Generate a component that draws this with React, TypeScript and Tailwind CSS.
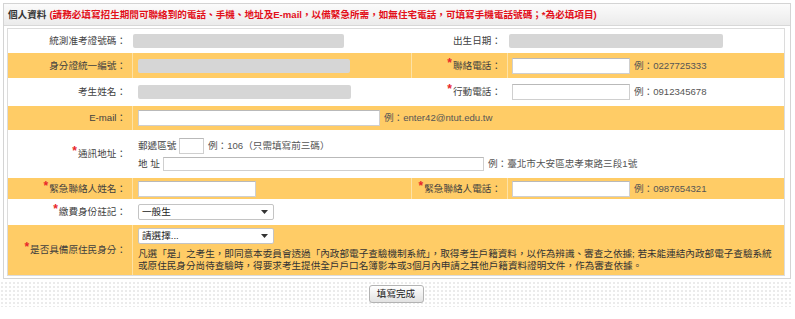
import React from "react";

const FONT = "font-['Liberation_Sans','Noto_Sans_CJK_TC',sans-serif]";

function Star() {
  return <span className="relative top-[-3px] mr-[1px] text-[12px] font-bold leading-none text-[#e8262a]">*</span>;
}

function Label({ children, star, w }: { children: React.ReactNode; star?: boolean; w: string }) {
  return (
    <div className={`${w} flex shrink-0 items-center justify-end pr-[6px] whitespace-nowrap`}>
      {star && <Star />}
      <span>{children}</span>
    </div>
  );
}

function Bar({ w = "w-[212px]" }: { w?: string }) {
  return <div className={`${w} h-[14px] rounded-[2px] bg-[#d6d6d6]`} />;
}

function Input({ w, h = "h-[16px]" }: { w: string; h?: string }) {
  return <div className={`${w} ${h} shrink-0 border border-[#cfcfcf] border-t-[#b9b9b9] bg-white`} />;
}

function Select({ text }: { text: string }) {
  return (
    <div className="flex h-[16px] w-[136px] items-center justify-between rounded-[2px] border border-[#c4c4c4] bg-white pl-[3px] pr-[5px] text-[#222]">
      <span>{text}</span>
      <svg width="7" height="4" viewBox="0 0 7 4">
        <path d="M0 0h7L3.5 4z" fill="#333" />
      </svg>
    </div>
  );
}

function Ex({ children }: { children: React.ReactNode }) {
  return <span className="ml-[4px] whitespace-nowrap text-[#555]">{children}</span>;
}

export default function App() {
  const orange = "bg-[#ffcc66]";
  const sep = "border-l border-[#fde2a6]";
  return (
    <div className={`${FONT} w-[795px] h-[319px] bg-white text-[9.6px] leading-[12px] text-[#3f3f3f]`}>
      <div className="pl-[3px] pt-[3px]">
        <div className="w-[788px] border border-[#d4d4d4] bg-white pb-[2px]">
          <div className="flex h-[22px] items-center border-b border-[#d8d8d8] bg-[linear-gradient(#fbfbfb,#ebebeb)] pl-[4px] font-bold">
            <span className="text-[#333]">個人資料</span>
            <span className="ml-[3px] text-[#e3101a]">
              (請務必填寫招生期間可聯絡到的電話、手機、地址及E-mail，以備緊急所需，如無住宅電話，可填寫手機電話號碼；*為必填項目)
            </span>
          </div>
          <div className="ml-[3px] mt-[2px] w-[778px] border border-[#dcdcdc]">
            {/* R1 */}
            <div className="flex h-[23px] bg-white">
              <Label w="w-[124px]">統測准考證號碼：</Label>
              <div className="flex w-[279px] items-center pl-[1px]">
                <Bar w="w-[211px]" />
              </div>
              <Label w="w-[96px]">出生日期：</Label>
              <div className="flex flex-1 items-center pl-[2px]">
                <Bar w="w-[214px]" />
              </div>
            </div>
            {/* R2 */}
            <div className={`flex h-[26px] border-t border-white ${orange}`}>
              <Label w="w-[124px]">身分證統一編號：</Label>
              <div className={`flex w-[279px] items-center pl-[5px] ${sep}`}>
                <Bar />
              </div>
              <div className={`${sep} flex`}>
                <Label w="w-[95px]" star>聯絡電話：</Label>
              </div>
              <div className={`flex flex-1 items-center pl-[4px] ${sep}`}>
                <Input w="w-[118px]" />
                <Ex>例：0227725333</Ex>
              </div>
            </div>
            {/* R3 */}
            <div className="flex h-[28px] bg-white">
              <Label w="w-[124px]">考生姓名：</Label>
              <div className="flex w-[279px] items-center pl-[6px]">
                <Bar w="w-[213px]" />
              </div>
              <Label w="w-[96px]" star>行動電話：</Label>
              <div className="flex flex-1 items-center pl-[5px]">
                <Input w="w-[118px]" />
                <Ex>例：0912345678</Ex>
              </div>
            </div>
            {/* R4 */}
            <div className={`flex h-[24px] ${orange}`}>
              <Label w="w-[124px]">E-mail：</Label>
              <div className={`flex flex-1 items-center pl-[5px] ${sep}`}>
                <Input w="w-[242px]" />
                <Ex>例：enter42@ntut.edu.tw</Ex>
              </div>
            </div>
            {/* R5 */}
            <div className="flex h-[48px] bg-white">
              <Label w="w-[124px]" star>通訊地址：</Label>
              <div className="flex flex-1 flex-col justify-center gap-[3px] pl-[6px]">
                <div className="flex items-center">
                  <span className="w-[41px]">郵遞區號</span>
                  <Input w="w-[25px]" />
                  <Ex>例：106（只需填寫前三碼）</Ex>
                </div>
                <div className="flex items-center">
                  <span className="w-[25px]">地 址</span>
                  <Input w="w-[321px]" h="h-[14px]" />
                  <Ex>例：臺北市大安區忠孝東路三段1號</Ex>
                </div>
              </div>
            </div>
            {/* R6 */}
            <div className={`flex h-[21px] ${orange}`}>
              <Label w="w-[124px]" star>緊急聯絡人姓名：</Label>
              <div className={`flex w-[279px] items-center pl-[5px] ${sep}`}>
                <Input w="w-[118px]" />
              </div>
              <div className={`${sep} flex`}>
                <Label w="w-[95px]" star>緊急聯絡人電話：</Label>
              </div>
              <div className={`flex flex-1 items-center pl-[4px] ${sep}`}>
                <Input w="w-[118px]" />
                <Ex>例：0987654321</Ex>
              </div>
            </div>
            {/* R7 */}
            <div className="flex h-[26px] bg-white">
              <Label w="w-[124px]" star>繳費身份註記：</Label>
              <div className="flex flex-1 items-center pl-[6px]">
                <Select text="一般生" />
              </div>
            </div>
            {/* R8 */}
            <div className={`flex h-[50px] ${orange}`}>
              <Label w="w-[124px]" star>是否具備原住民身分：</Label>
              <div className={`flex flex-1 flex-col justify-center pl-[5px] ${sep}`}>
                <Select text="請選擇..." />
                <div className="mt-[4px] whitespace-nowrap text-[#333]">
                  凡選「是」之考生，即同意本委員會透過「內政部電子查驗機制系統」，取得考生戶籍資料，以作為辨識、審查之依據; 若未能連結內政部電子查驗系統
                  <br />
                  或原住民身分尚待查驗時，得要求考生提供全戶戶口名簿影本或3個月內申請之其他戶籍資料證明文件，作為審查依據。
                </div>
              </div>
            </div>
          </div>
        </div>
      </div>
      <div className="mt-[2px] flex h-[26px] w-[792px] items-center justify-center bg-[radial-gradient(#ebebeb_0.8px,transparent_0.9px)] bg-[length:4px_4px]">
        <div className="flex h-[18px] w-[55px] items-center justify-center rounded-[3px] border border-[#b3b3b3] bg-[linear-gradient(#ffffff,#e2e2e2)] text-[#222]">
          填寫完成
        </div>
      </div>
    </div>
  );
}
